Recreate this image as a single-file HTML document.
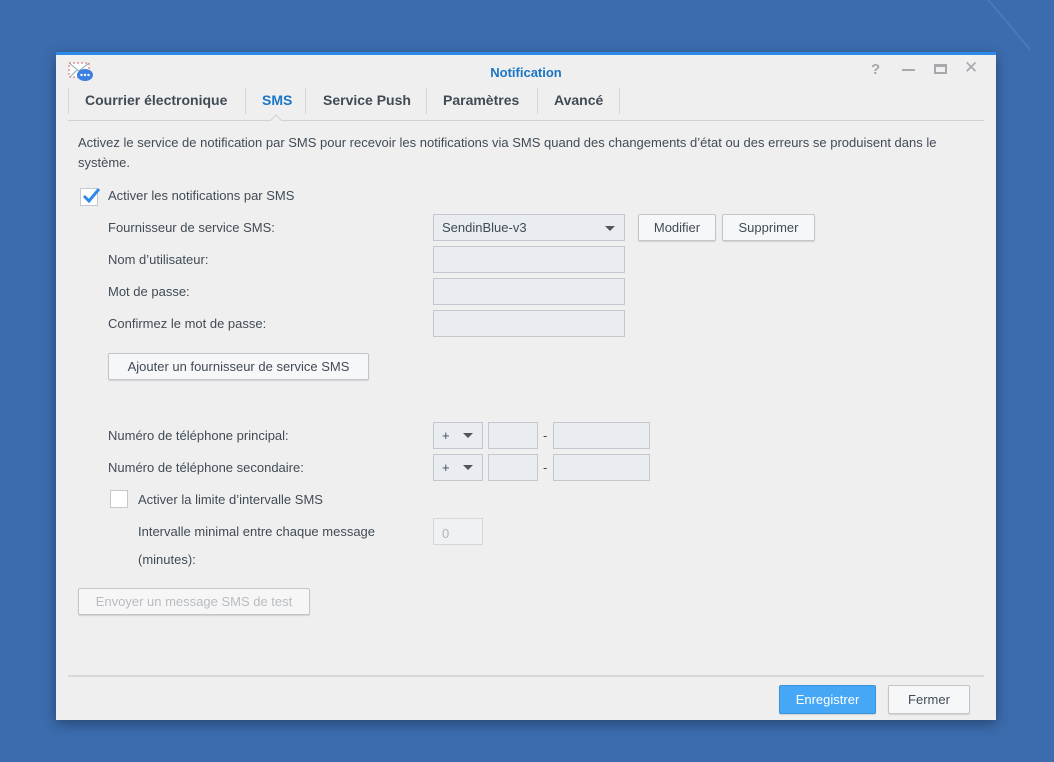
<!DOCTYPE html>
<html><head><meta charset="utf-8"><style>
*{box-sizing:border-box;margin:0;padding:0}
body{width:1054px;height:762px;background:#3c6cae;font-family:"Liberation Sans",sans-serif;font-size:13px;color:#414b55;position:relative;overflow:hidden}
.a{position:absolute}
.win{left:56px;top:52px;width:940px;height:668px;background:#efefef;border-top:3px solid #2d8ae6;box-shadow:0 4px 12px rgba(0,0,0,.35)}
.tab{top:37px;font-weight:bold;font-size:14px;color:#414b55}
.sep{top:33px;width:1px;height:26px;background:#d6d6d6}
.inp{background:#e9edf1;border:1px solid #c4c8cc;height:27px}
.btn{background:#f6f7f9;border:1px solid #c2c6ca;border-radius:2px;box-shadow:0 1px 1px rgba(0,0,0,.12);text-align:center;line-height:25px;height:27px;color:#414b55}
.lbl{font-size:13px}
.arr{width:0;height:0;border-left:5px solid transparent;border-right:5px solid transparent;border-top:5px solid #555}
</style></head><body>
<div class="a" style="left:1000px;top:-30px;width:2px;height:90px;background:#4b78b6;transform:rotate(-40deg)"></div>
<div class="a win">
<svg class="a" style="left:12px;top:6px" width="26" height="22" viewBox="0 0 26 22"><rect x="1" y="2" width="20" height="14" fill="#fff" stroke="#e06060" stroke-dasharray="2 2"/><path d="M1 2 L11 10 L21 2" stroke="#8aa" fill="none"/><path d="M2 16 L9 9" stroke="#8aa"/><ellipse cx="17" cy="14" rx="8" ry="6" fill="#3d7fe0"/><circle cx="13.5" cy="14" r="1.2" fill="#fff"/><circle cx="17" cy="14" r="1.2" fill="#fff"/><circle cx="20.5" cy="14" r="1.2" fill="#fff"/></svg>
<div class="a" style="left:0;width:940px;top:10px;text-align:center;font-weight:bold;color:#1a76c4;font-size:13px">Notification</div>
<div class="a" style="left:815px;top:6px;color:#a5a9ad;font-size:15px;font-weight:bold">?</div>
<div class="a" style="left:846px;top:14px;width:13px;height:2px;background:#a5a9ad"></div>
<div class="a" style="left:878px;top:9px;width:13px;height:10px;border:2px solid #a5a9ad;border-top-width:3px"></div>
<div class="a" style="left:908px;top:3px;color:#a5a9ad;font-size:17px">✕</div>
<div class="sep a" style="left:12px"></div>
<div class="tab a" style="left:29px">Courrier électronique</div>
<div class="sep a" style="left:189px"></div>
<div class="tab a" style="left:206px;color:#1a76c4">SMS</div>
<div class="sep a" style="left:249px"></div>
<div class="tab a" style="left:267px">Service Push</div>
<div class="sep a" style="left:370px"></div>
<div class="tab a" style="left:387px">Paramètres</div>
<div class="sep a" style="left:481px"></div>
<div class="tab a" style="left:498px">Avancé</div>
<div class="sep a" style="left:563px"></div>
<div class="a" style="left:12px;top:65px;width:916px;height:1px;background:#cfd2d5"></div>
<div class="a" style="left:216px;top:61px;width:8px;height:8px;background:#efefef;border-left:1px solid #cfd2d5;border-top:1px solid #cfd2d5;transform:rotate(45deg)"></div>
<div class="a lbl" style="left:22px;top:78px;width:910px;line-height:20px">Activez le service de notification par SMS pour recevoir les notifications via SMS quand des changements d’état ou des erreurs se produisent dans le système.</div>
<div class="a" style="left:24px;top:133px;width:18px;height:18px;background:#fff;border:1px solid #c4c8cc"></div>
<svg class="a" style="left:25px;top:130px" width="20" height="20"><path d="M3 11 L8 16 L18 4" stroke="#2d8ae6" stroke-width="3" fill="none"/></svg>
<div class="a lbl" style="left:52px;top:133px">Activer les notifications par SMS</div>
<div class="a lbl" style="left:52px;top:165px">Fournisseur de service SMS:</div>
<div class="a inp" style="left:377px;top:159px;width:192px"></div>
<div class="a" style="left:386px;top:165px;color:#414b55">SendinBlue-v3</div>
<div class="a arr" style="left:549px;top:171px"></div>
<div class="a btn" style="left:582px;top:159px;width:78px">Modifier</div>
<div class="a btn" style="left:666px;top:159px;width:93px">Supprimer</div>
<div class="a lbl" style="left:52px;top:197px">Nom d’utilisateur:</div>
<div class="a inp" style="left:377px;top:191px;width:192px"></div>
<div class="a lbl" style="left:52px;top:229px">Mot de passe:</div>
<div class="a inp" style="left:377px;top:223px;width:192px"></div>
<div class="a lbl" style="left:52px;top:261px">Confirmez le mot de passe:</div>
<div class="a inp" style="left:377px;top:255px;width:192px"></div>
<div class="a btn" style="left:52px;top:298px;width:261px">Ajouter un fournisseur de service SMS</div>
<div class="a lbl" style="left:52px;top:373px">Numéro de téléphone principal:</div>
<div class="a inp" style="left:377px;top:367px;width:50px"></div><div class="a" style="left:386px;top:373px">+</div><div class="a arr" style="left:407px;top:378px"></div>
<div class="a inp" style="left:432px;top:367px;width:50px"></div><div class="a" style="left:487px;top:373px">-</div>
<div class="a inp" style="left:497px;top:367px;width:97px"></div>
<div class="a lbl" style="left:52px;top:405px">Numéro de téléphone secondaire:</div>
<div class="a inp" style="left:377px;top:399px;width:50px"></div><div class="a" style="left:386px;top:405px">+</div><div class="a arr" style="left:407px;top:410px"></div>
<div class="a inp" style="left:432px;top:399px;width:50px"></div><div class="a" style="left:487px;top:405px">-</div>
<div class="a inp" style="left:497px;top:399px;width:97px"></div>
<div class="a" style="left:54px;top:435px;width:18px;height:18px;background:#fff;border:1px solid #c4c8cc"></div>
<div class="a lbl" style="left:82px;top:437px">Activer la limite d’intervalle SMS</div>
<div class="a lbl" style="left:82px;top:469px">Intervalle minimal entre chaque message</div>
<div class="a lbl" style="left:82px;top:497px">(minutes):</div>
<div class="a" style="left:377px;top:463px;width:50px;height:27px;border:1px solid #d4d7da;background:#f0f1f2;color:#b0b4b8;padding:7px 8px">0</div>
<div class="a btn" style="left:22px;top:533px;width:232px;color:#b8bcc0;background:#f6f6f7">Envoyer un message SMS de test</div>
<div class="a" style="left:12px;top:620px;width:916px;height:2px;background:#d8d8d8"></div>
<div class="a btn" style="left:723px;top:630px;width:97px;height:29px;line-height:27px;background:#45a7f5;border-color:#3a94da;color:#fff">Enregistrer</div>
<div class="a btn" style="left:832px;top:630px;width:82px;height:29px;line-height:27px">Fermer</div>
</div>
</body></html>
